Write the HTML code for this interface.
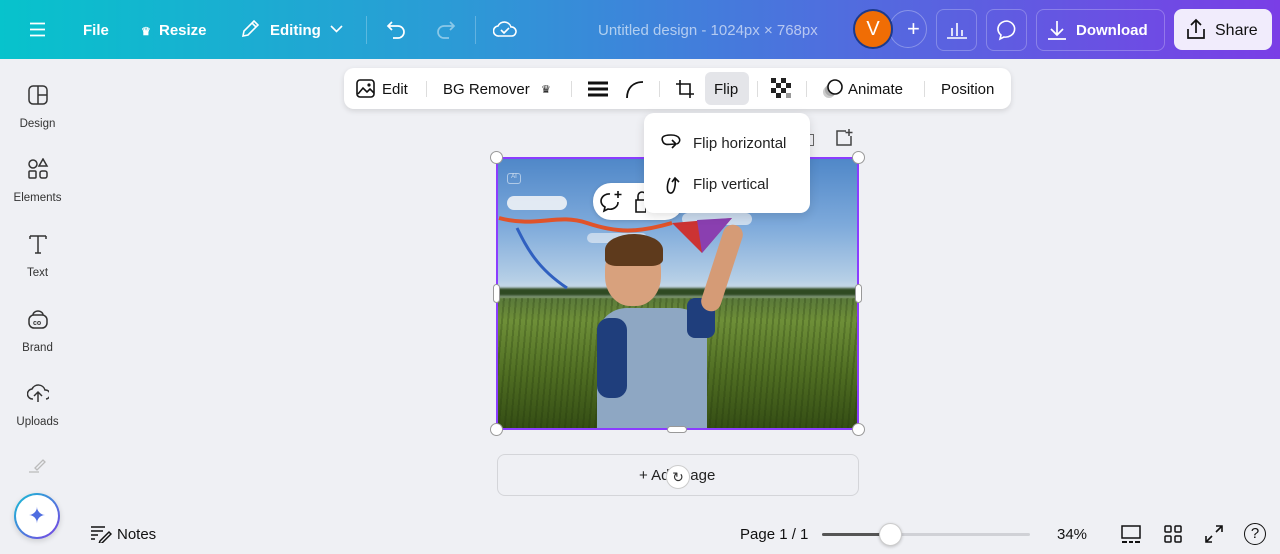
<!DOCTYPE html>
<html><head><meta charset="utf-8"><style>
*{margin:0;padding:0;box-sizing:border-box}
body{width:1280px;height:554px;overflow:hidden;background:#eff0f4;font-family:"Liberation Sans",sans-serif;position:relative;color:#111}
.top{position:absolute;left:0;top:0;width:1280px;height:59px;background:linear-gradient(90deg,#07c3cc 0%,#2b9bd6 35%,#4f6ede 65%,#7a3ee6 100%)}
.t{position:absolute;color:#fff;font-weight:bold;font-size:15px;top:22px}
.btn{position:absolute;top:9px;height:42px;border:1px solid rgba(255,255,255,.25);border-radius:8px}
.side{position:absolute;left:0;width:75px;text-align:center;font-size:11.5px;color:#333}
.side svg{display:block;margin:0 auto 12px}
.tb{position:absolute;left:344px;top:68px;width:667px;height:41px;background:#fff;border-radius:10px;box-shadow:0 2px 6px rgba(0,0,0,.12)}
.tb span{position:absolute;top:13px;font-size:15px;color:#111}
.sep{position:absolute;top:13px;width:1px;height:16px;background:#ddd}
.h{position:absolute;width:13px;height:13px;border-radius:50%;background:#fff;border:1px solid #999}
</style></head><body>
<div class="top">
<svg style="position:absolute;left:29px;top:22px" width="17" height="15"><path d="M1 1.5H16M1 7.5H16M1 13.5H16" stroke="#fff" stroke-width="1.8"/></svg>
<div class="t" style="left:83px">File</div>
<div class="t" style="left:141px;font-size:11px;top:25px">♛</div>
<div class="t" style="left:159px">Resize</div>
<svg style="position:absolute;left:240px;top:19px" width="20" height="20"><path d="M3 17l1-5L14 2l4 4L8 16z M12 4l4 4" stroke="#fff" stroke-width="1.6" fill="none"/></svg>
<div class="t" style="left:270px">Editing</div>
<svg style="position:absolute;left:330px;top:25px" width="13" height="9"><path d="M1 1l5.5 5.5L12 1" stroke="#fff" stroke-width="1.6" fill="none"/></svg>
<div style="position:absolute;left:366px;top:16px;width:1px;height:28px;background:rgba(255,255,255,.25)"></div>
<svg style="position:absolute;left:386px;top:20px" width="22" height="20"><path d="M6 2L2 6l4 4M2 6h10a6 6 0 010 12H7" stroke="#fff" stroke-width="1.7" fill="none"/></svg>
<svg style="position:absolute;left:434px;top:20px" width="22" height="20"><path d="M16 2l4 4-4 4M20 6H10a6 6 0 000 12h5" stroke="rgba(255,255,255,.45)" stroke-width="1.7" fill="none"/></svg>
<div style="position:absolute;left:475px;top:16px;width:1px;height:28px;background:rgba(255,255,255,.25)"></div>
<svg style="position:absolute;left:493px;top:18px" width="24" height="22"><path d="M6 18a5 5 0 01-1-10 7 7 0 0113 1 4.5 4.5 0 011 9z M8 12l3 3 5-5" stroke="#fff" stroke-width="1.6" fill="none"/></svg>
<div style="position:absolute;left:598px;top:22px;color:rgba(255,255,255,.6);font-size:15px">Untitled design - 1024px × 768px</div>
<div style="position:absolute;left:889px;top:10px;width:38px;height:38px;border-radius:50%;border:1px solid rgba(255,255,255,.3)"></div>
<div style="position:absolute;left:907px;top:16px;color:#fff;font-size:22px">+</div>
<div style="position:absolute;left:853px;top:9px;width:40px;height:40px;border-radius:50%;background:#f06d05;border:2px solid #1c3a8c;color:#fff;font-size:20px;text-align:center;line-height:36px">V</div>
<div class="btn" style="left:936px;width:41px"></div>
<svg style="position:absolute;left:946px;top:20px" width="22" height="20"><path d="M1 18h20M6 16V8M11 16V3M16 16V10" stroke="#fff" stroke-width="1.6"/></svg>
<div class="btn" style="left:986px;width:41px"></div>
<svg style="position:absolute;left:995px;top:19px" width="24" height="22"><path d="M12 2a9 8 0 00-6 14l-1 4 4-2a9 8 0 103-16z" stroke="#fff" stroke-width="1.6" fill="none"/></svg>
<div class="btn" style="left:1036px;width:129px"></div>
<svg style="position:absolute;left:1046px;top:19px" width="22" height="22"><path d="M11 2v13M5 10l6 6 6-6M2 20h18" stroke="#fff" stroke-width="1.7" fill="none"/></svg>
<div class="t" style="left:1076px">Download</div>
<div style="position:absolute;left:1174px;top:9px;width:98px;height:41px;border-radius:8px;background:#f1ecfc"></div>
<svg style="position:absolute;left:1185px;top:18px" width="22" height="22"><path d="M11 15V2M6 7l5-5 5 5M3 11v9h16v-9" stroke="#111" stroke-width="1.7" fill="none"/></svg>
<div class="t" style="left:1215px;color:#111;font-weight:normal;font-size:16px">Share</div>
</div>

<div class="side" style="top:84px"><svg width="22" height="22"><rect x="2" y="2" width="18" height="18" rx="4" stroke="#333" stroke-width="1.5" fill="none"/><path d="M11 2v18M11 11h9" stroke="#333" stroke-width="1.5"/></svg>Design</div>
<div class="side" style="top:158px"><svg width="22" height="22"><circle cx="6" cy="6" r="4" stroke="#333" stroke-width="1.5" fill="none"/><path d="M16 1l4 7h-8z" stroke="#333" stroke-width="1.5" fill="none"/><rect x="2" y="13" width="7" height="7" rx="1" stroke="#333" stroke-width="1.5" fill="none"/><rect x="13" y="13" width="7" height="7" rx="2" stroke="#333" stroke-width="1.5" fill="none"/></svg>Elements</div>
<div class="side" style="top:233px"><svg width="22" height="22"><path d="M3 3h16M11 3v17M3 3v3M19 3v3M8 20h6" stroke="#333" stroke-width="1.5" fill="none"/></svg>Text</div>
<div class="side" style="top:308px"><svg width="22" height="22"><rect x="2" y="7" width="18" height="13" rx="5" stroke="#333" stroke-width="1.5" fill="none"/><path d="M6 7a5 4 0 0110 0" stroke="#333" stroke-width="1.5" fill="none"/><text x="6" y="17" font-size="7" font-family="Liberation Sans" font-weight="bold" fill="#333">co</text></svg>Brand</div>
<div class="side" style="top:382px"><svg width="22" height="22"><path d="M6 17a5 5 0 01-1-10 7 7 0 0113 1 4.5 4.5 0 011 9M11 20v-9M7 14l4-4 4 4" stroke="#333" stroke-width="1.5" fill="none"/></svg>Uploads</div>
<svg style="position:absolute;left:27px;top:456px" width="22" height="18"><path d="M8 12l8-8 2 2-8 8zM2 16h10" stroke="#bbb" stroke-width="1.3" fill="none"/></svg>
<div style="position:absolute;left:14px;top:493px;width:46px;height:46px;border-radius:50%;background:linear-gradient(135deg,#15c0d4,#7b3fe4);padding:2px;box-shadow:0 2px 6px rgba(0,0,0,.15)"><div style="width:42px;height:42px;border-radius:50%;background:#fff;text-align:center;line-height:42px;color:#4f6de0;font-size:22px">✦</div></div>

<div class="tb">
<svg style="position:absolute;left:11px;top:10px" width="22" height="22"><rect x="2" y="2" width="17" height="17" rx="3" stroke="#111" stroke-width="1.6" fill="none"/><path d="M3 16l5-6 4 4 3-3 4 4" stroke="#111" stroke-width="1.6" fill="none"/><circle cx="14" cy="7" r="1.6" fill="#111"/></svg>
<span style="left:38px">Edit</span><div class="sep" style="left:82px"></div>
<span style="left:99px">BG Remover</span><span style="left:197px;font-size:11px;top:15px">♛</span><div class="sep" style="left:227px"></div>
<svg style="position:absolute;left:244px;top:12px" width="20" height="18"><path d="M0 3h20M0 9h20M0 15h20" stroke="#111" stroke-width="3"/></svg>
<svg style="position:absolute;left:281px;top:11px" width="20" height="20"><path d="M2 19C2 9 8 3 18 3" stroke="#111" stroke-width="1.8" fill="none"/></svg>
<div class="sep" style="left:315px"></div>
<svg style="position:absolute;left:330px;top:10px" width="22" height="22"><path d="M6 2v14h14M2 6h14v14" stroke="#111" stroke-width="1.6" fill="none"/></svg>
<div style="position:absolute;left:361px;top:4px;width:44px;height:33px;border-radius:6px;background:#e4e5e9"></div>
<span style="left:370px">Flip</span><div class="sep" style="left:413px"></div>
<svg style="position:absolute;left:427px;top:10px" width="21" height="21"><g fill="#222"><rect x="0" y="0" width="5" height="5"/><rect x="10" y="0" width="5" height="5"/><rect x="5" y="5" width="5" height="5"/><rect x="15" y="5" width="5" height="5"/><rect x="0" y="10" width="5" height="5"/><rect x="10" y="10" width="5" height="5"/><rect x="5" y="15" width="5" height="5"/><rect x="15" y="15" width="5" height="5" fill="#999"/></g></svg>
<div class="sep" style="left:462px"></div>
<svg style="position:absolute;left:477px;top:10px" width="24" height="22"><circle cx="8" cy="14" r="6" fill="#ccc"/><circle cx="10" cy="12" r="6" fill="#aaa"/><circle cx="14" cy="9" r="7" stroke="#111" stroke-width="1.6" fill="#fff"/></svg>
<span style="left:504px">Animate</span><div class="sep" style="left:580px"></div>
<span style="left:597px">Position</span>
</div>

<!-- image -->
<div style="position:absolute;left:497px;top:158px;width:361px;height:271px;overflow:hidden;background:linear-gradient(180deg,#4f87c8 0%,#7eaadb 25%,#b6cfe6 45%,#d4e0ea 50%,#5b7a3a 52%,#6e8f38 60%,#4f6d22 80%,#344d14 100%)">
<div style="position:absolute;left:0;top:130px;width:361px;height:8px;background:#2f4a22;filter:blur(1px)"></div>
<div style="position:absolute;left:0;top:140px;width:361px;height:131px;background:repeating-linear-gradient(95deg,rgba(30,50,10,.25) 0 2px,transparent 2px 6px)"></div>
<div style="position:absolute;left:10px;top:38px;width:60px;height:14px;border-radius:8px;background:#eef2f6;opacity:.9"></div>
<div style="position:absolute;left:185px;top:55px;width:70px;height:12px;border-radius:8px;background:#eef2f6;opacity:.7"></div>
<div style="position:absolute;left:90px;top:75px;width:60px;height:10px;border-radius:8px;background:#eef2f6;opacity:.6"></div>
<svg style="position:absolute;left:0;top:50px" width="361" height="90"><path d="M2 10C40 20 60 5 90 15S140 25 175 15" stroke="#e0532a" stroke-width="4" fill="none"/><path d="M20 20c10 20 20 40 50 60" stroke="#3060c0" stroke-width="3" fill="none"/><path d="M175 15l60-5-30 35z" fill="#c33"/><path d="M200 12l35-2-30 35z" fill="#8a3fb0"/></svg>
<!-- boy -->
<div style="position:absolute;left:108px;top:82px;width:56px;height:66px;border-radius:45%;background:#d8a17d"></div>
<div style="position:absolute;left:108px;top:76px;width:58px;height:32px;border-radius:50% 50% 20% 20%;background:#5e3a1c"></div>
<div style="position:absolute;left:100px;top:150px;width:110px;height:121px;border-radius:30px 30px 0 0;background:#8ea7c3"></div>
<div style="position:absolute;left:100px;top:160px;width:30px;height:80px;border-radius:12px;background:#1f3e7c"></div>
<div style="position:absolute;left:190px;top:140px;width:28px;height:40px;background:#1f3e7c;border-radius:8px"></div>
<div style="position:absolute;left:215px;top:65px;width:20px;height:90px;background:#d59b76;border-radius:10px;transform:rotate(18deg)"></div>
<div style="position:absolute;left:10px;top:15px;width:14px;height:11px;border:1px solid rgba(255,255,255,.5);border-radius:3px;font-size:6px;color:rgba(255,255,255,.7);text-align:center">AI</div>
</div>
<div style="position:absolute;left:496px;top:157px;width:363px;height:273px;border:2px solid #8b3dff"></div>
<div class="h" style="left:490px;top:151px"></div><div class="h" style="left:852px;top:151px"></div>
<div class="h" style="left:490px;top:423px"></div><div class="h" style="left:852px;top:423px"></div>
<div style="position:absolute;left:493px;top:284px;width:7px;height:19px;background:#fff;border:1px solid #999;border-radius:4px"></div>
<div style="position:absolute;left:855px;top:284px;width:7px;height:19px;background:#fff;border:1px solid #999;border-radius:4px"></div>
<div style="position:absolute;left:667px;top:426px;width:20px;height:7px;background:#fff;border:1px solid #999;border-radius:4px"></div>

<div style="position:absolute;left:593px;top:183px;width:90px;height:37px;border-radius:18px;background:#fff;box-shadow:0 1px 4px rgba(0,0,0,.15)"></div>
<svg style="position:absolute;left:599px;top:190px" width="26" height="24"><path d="M11 4a8 7 0 00-5 13l-1 4 4-2a8 7 0 0010-7" stroke="#111" stroke-width="1.6" fill="none"/><path d="M19 1v7M15.5 4.5h7" stroke="#111" stroke-width="1.6"/></svg>
<svg style="position:absolute;left:634px;top:190px" width="12" height="24"><path d="M2 10h10v12H2zM4 10V6a4 4 0 018 0" stroke="#111" stroke-width="1.6" fill="none"/></svg>
<svg style="position:absolute;left:834px;top:128px" width="20" height="20"><path d="M12 3H3v14h14V8M15 1v7M11.5 4.5h7" stroke="#444" stroke-width="1.5" fill="none"/></svg>
<div style="position:absolute;left:806px;top:134px;width:8px;height:12px;border:1.5px solid #666;border-left:none"></div>

<div style="position:absolute;left:644px;top:113px;width:166px;height:100px;background:#fff;border-radius:10px;box-shadow:0 3px 10px rgba(0,0,0,.12)"></div>
<svg style="position:absolute;left:661px;top:133px" width="22" height="18"><path d="M16 11c5-3 3-9-6-9S0 5 2 9s8 2 12 2M11 7l4 4-4 4" stroke="#111" stroke-width="1.6" fill="none"/></svg>
<div style="position:absolute;left:693px;top:135px;font-size:15px;color:#222">Flip horizontal</div>
<svg style="position:absolute;left:663px;top:172px" width="18" height="24"><path d="M7 6c-3 5-4 14 0 15s6-7 5-15M9 10l3-4 4 4" stroke="#111" stroke-width="1.6" fill="none"/></svg>
<div style="position:absolute;left:693px;top:176px;font-size:15px;color:#222">Flip vertical</div>

<div style="position:absolute;left:497px;top:454px;width:362px;height:42px;border:1px solid #d4d5d9;border-radius:8px"></div>
<div style="position:absolute;left:639px;top:467px;font-size:15px;color:#222">+ Add page</div>
<div style="position:absolute;left:666px;top:465px;width:24px;height:24px;border-radius:50%;background:#fff;border:1px solid #ccc;text-align:center;line-height:22px;font-size:14px;color:#333">↻</div>

<svg style="position:absolute;left:90px;top:525px" width="22" height="18"><path d="M1 2h14M1 6h12M1 10h7M1 14h4M10 16l9-9 2 2-9 9-3 1z" stroke="#111" stroke-width="1.5" fill="none"/></svg>
<div style="position:absolute;left:117px;top:526px;font-size:15px">Notes</div>
<div style="position:absolute;left:740px;top:526px;font-size:15px">Page 1 / 1</div>
<div style="position:absolute;left:822px;top:533px;width:208px;height:3px;background:#d0d1d6;border-radius:2px"></div>
<div style="position:absolute;left:822px;top:533px;width:68px;height:3px;background:#555;border-radius:2px"></div>
<div style="position:absolute;left:879px;top:523px;width:23px;height:23px;border-radius:50%;background:#fff;border:1px solid #ccc;box-shadow:0 1px 3px rgba(0,0,0,.2)"></div>
<div style="position:absolute;left:1057px;top:526px;font-size:15px">34%</div>
<svg style="position:absolute;left:1120px;top:523px" width="22" height="22"><rect x="2" y="3" width="18" height="12" stroke="#111" stroke-width="1.5" fill="none"/><path d="M2 19h5M9 19h4M15 19h5" stroke="#111" stroke-width="2"/></svg>
<svg style="position:absolute;left:1163px;top:524px" width="20" height="20"><rect x="2" y="2" width="6" height="6" rx="1" stroke="#111" stroke-width="1.5" fill="none"/><rect x="12" y="2" width="6" height="6" rx="1" stroke="#111" stroke-width="1.5" fill="none"/><rect x="2" y="12" width="6" height="6" rx="1" stroke="#111" stroke-width="1.5" fill="none"/><rect x="12" y="12" width="6" height="6" rx="1" stroke="#111" stroke-width="1.5" fill="none"/></svg>
<svg style="position:absolute;left:1204px;top:524px" width="20" height="20"><path d="M12 2h6v6M18 2l-6 6M8 18H2v-6M2 18l6-6" stroke="#111" stroke-width="1.6" fill="none"/></svg>
<div style="position:absolute;left:1244px;top:523px;width:22px;height:22px;border-radius:50%;border:1.6px solid #111;text-align:center;font-size:15px;line-height:19px">?</div>
</body></html>
